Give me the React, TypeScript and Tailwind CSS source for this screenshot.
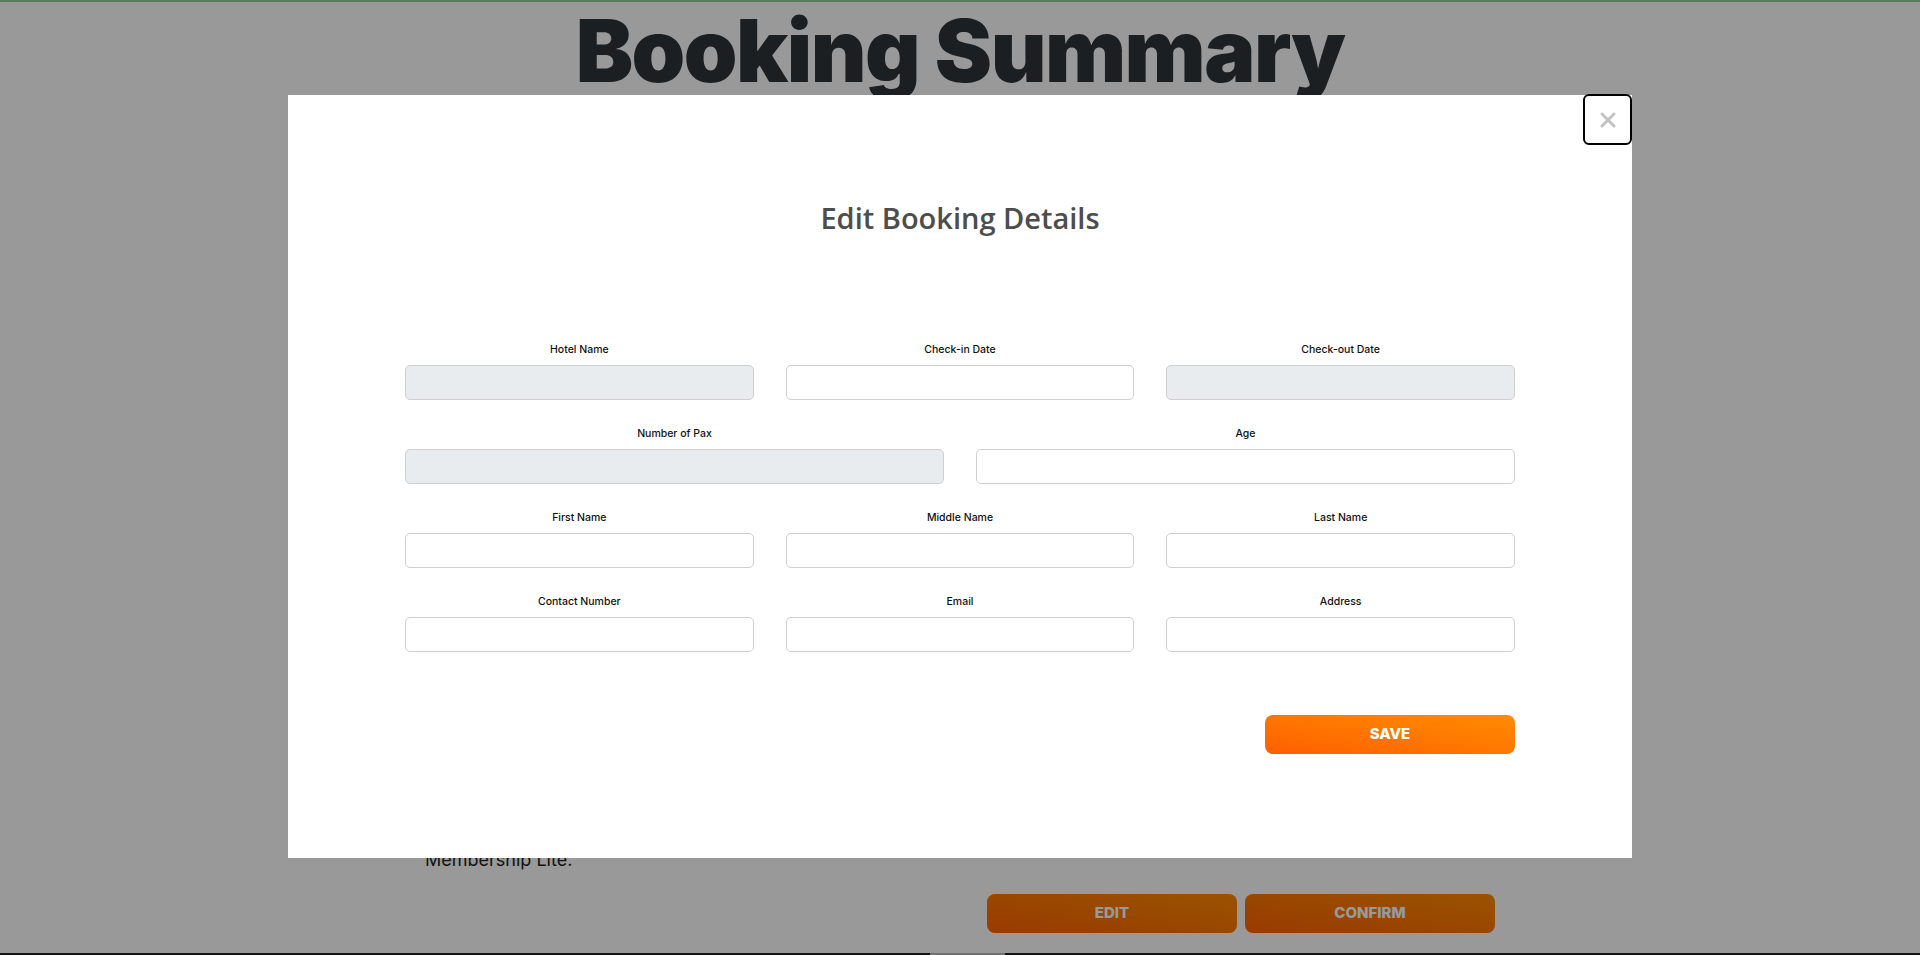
import React from 'react';

interface Field {
  id: string;
  label: string;
  disabled?: boolean;
}

const ROWS: { cols: string; fields: Field[] }[] = [
  {
    cols: 'grid-cols-3',
    fields: [
      { id: 'hotel', label: 'Hotel Name', disabled: true },
      { id: 'checkin', label: 'Check-in Date' },
      { id: 'checkout', label: 'Check-out Date', disabled: true },
    ],
  },
  {
    cols: 'grid-cols-2',
    fields: [
      { id: 'pax', label: 'Number of Pax', disabled: true },
      { id: 'age', label: 'Age' },
    ],
  },
  {
    cols: 'grid-cols-3',
    fields: [
      { id: 'first', label: 'First Name' },
      { id: 'middle', label: 'Middle Name' },
      { id: 'last', label: 'Last Name' },
    ],
  },
  {
    cols: 'grid-cols-3',
    fields: [
      { id: 'contact', label: 'Contact Number' },
      { id: 'email', label: 'Email' },
      { id: 'address', label: 'Address' },
    ],
  },
];

const sans = "font-['Inter','Liberation_Sans',sans-serif]";

function FormField({ field }: { field: Field }) {
  return (
    <div className="flex flex-col">
      <label
        htmlFor={field.id}
        className={`${sans} h-4 text-center text-[10.5px] leading-4 font-medium text-[#111]`}
      >
        {field.label}
      </label>
      <input
        id={field.id}
        disabled={field.disabled}
        className={`mt-[7px] h-[35px] w-full rounded-[5px] border border-[#cfcfcf] px-3 text-sm outline-none ${
          field.disabled ? 'bg-[#e9ecef]' : 'bg-white'
        }`}
      />
    </div>
  );
}

export default function App() {
  return (
    <div className="relative h-[955px] overflow-hidden bg-white">
      {/* page underneath the dialog */}
      <div className="flex h-full flex-col border-t-2 border-[#97cf97]">
        <h1
          className={`${sans} pt-[6px] text-center text-[86px] leading-none font-black tracking-[-1.5px] text-[#30343a]`}
        >
          Booking Summary
        </h1>

        <div className="mx-auto flex w-[1070px] flex-1 flex-col">
          <div className="h-[752px]" />
          <p className={`${sans} text-[18px] leading-7 text-[#222]`}>Membership Lite.</p>
          <div className="mt-[20px] flex justify-end gap-2">
            <button className={`${sans} h-[39px] w-[250px] rounded-lg bg-linear-to-tr from-[#ff6200] to-[#ff8a00] text-[15px] font-extrabold text-white`}>
              EDIT
            </button>
            <button className={`${sans} h-[39px] w-[250px] rounded-lg bg-linear-to-tr from-[#ff6200] to-[#ff8a00] text-[15px] font-extrabold text-white`}>
              CONFIRM
            </button>
          </div>
        </div>

        <div className="flex h-[2px]">
          <div className="w-[930px] bg-[#222]" />
          <div className="w-[75px] bg-[#bbb]" />
          <div className="flex-1 bg-[#222]" />
        </div>
      </div>

      {/* overlay + dialog */}
      <div className="fixed inset-0 flex justify-center bg-black/40">
        <div className="relative mt-[95px] h-[763px] w-[1344px] bg-white">
          <button
            type="button"
            className="absolute top-[-1px] right-0 flex h-[51px] w-[49px] items-center justify-center rounded-md border-2 border-black bg-white"
          >
            <svg className="h-[16px] w-[16px]" viewBox="0 0 16 16" fill="none" stroke="#c4c4c4" strokeWidth={3} strokeLinecap="round">
              <path d="M2 2l12 12M14 2L2 14" />
            </svg>
          </button>

          <h2 className="pt-[103px] text-center font-['Open_Sans','Noto_Sans',sans-serif] text-[29px] leading-[40px] font-semibold text-[#4d4d4d]">
            Edit Booking Details
          </h2>

          <form className="mx-auto mt-[104px] flex w-[1110px] flex-col gap-y-[26px]">
            {ROWS.map((row, i) => (
              <div key={i} className={`grid ${row.cols} gap-x-[32px]`}>
                {row.fields.map((f) => (
                  <FormField key={f.id} field={f} />
                ))}
              </div>
            ))}

            <div className="mt-[37px] flex justify-end">
              <button
                type="button"
                className={`${sans} h-[39px] w-[250px] rounded-lg bg-linear-to-tr from-[#ff5e00] to-[#ff8c00] text-[15px] font-extrabold text-white`}
              >
                SAVE
              </button>
            </div>
          </form>
        </div>
      </div>
    </div>
  );
}
